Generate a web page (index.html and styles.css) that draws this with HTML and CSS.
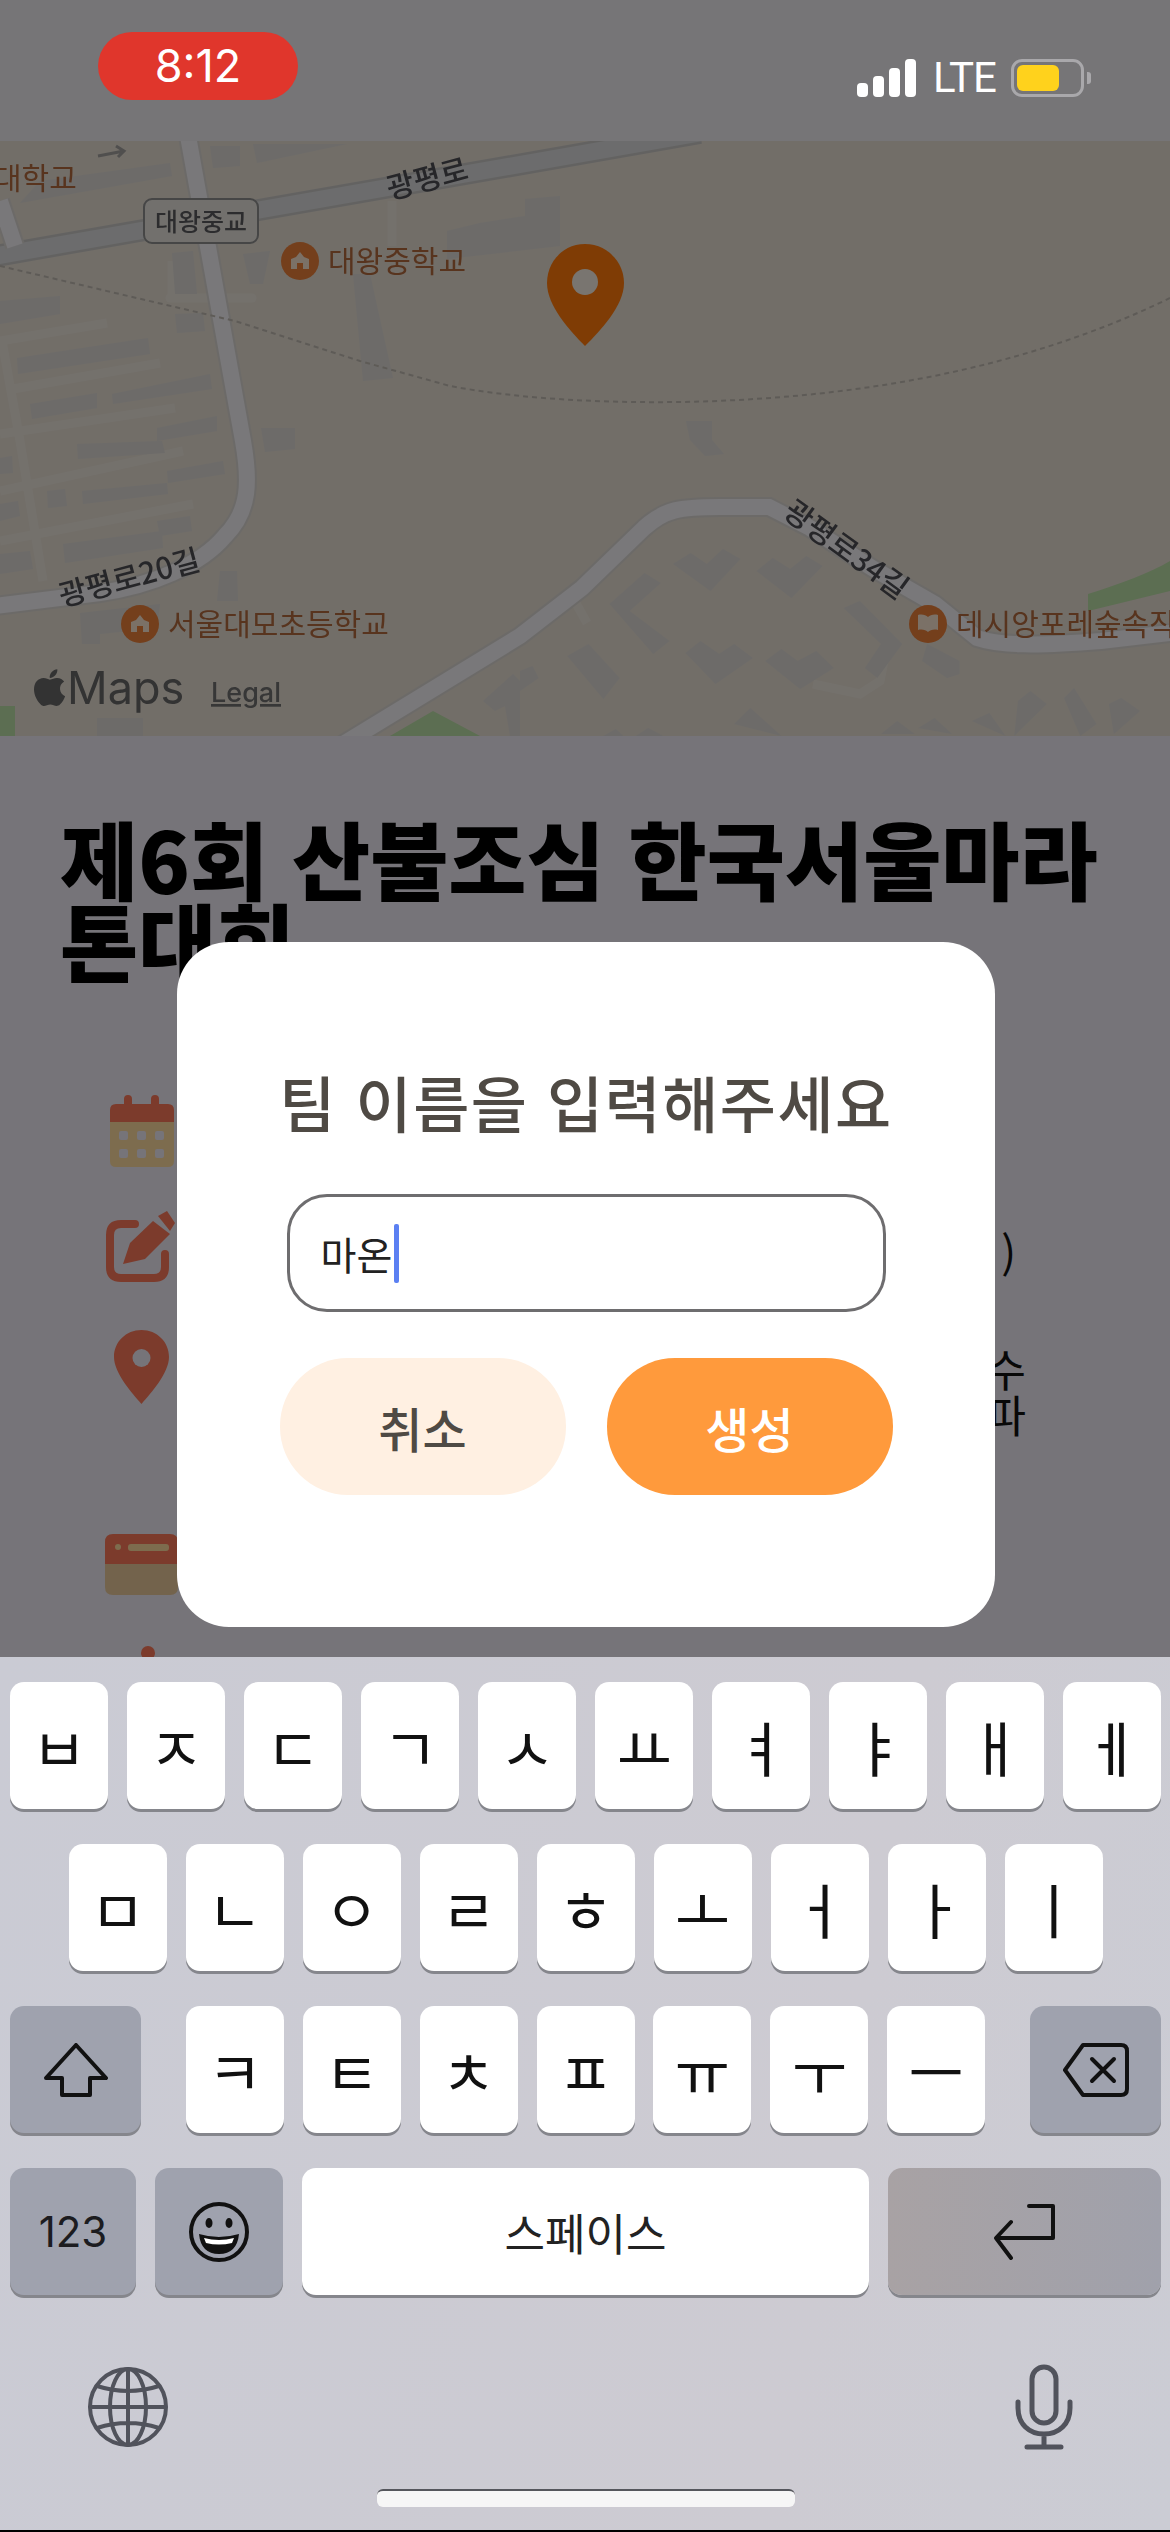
FILE: index.html

```html
<!DOCTYPE html>
<html lang="ko">
<head>
    <meta charset="UTF-8">
    <meta name="viewport" content="width=device-width, initial-scale=1.0">
    <title>제6회 산불조심 한국서울마라톤대회</title>
    <link rel="stylesheet" href="styles.css">
</head>
<body>
<div class="phone">
    <div class="status-bar">
        <div class="time-pill">8:12</div>
        <div class="status-right">
            <svg class="signal" width="60" height="38" viewBox="0 0 60 38">
                <rect x="0" y="24" width="11" height="14" rx="4" fill="#fff"/>
                <rect x="16" y="17" width="11" height="21" rx="4" fill="#fff"/>
                <rect x="32" y="9" width="11" height="29" rx="4" fill="#fff"/>
                <rect x="48" y="0" width="11" height="38" rx="4" fill="#fff"/>
            </svg>
            <span class="lte">LTE</span>
            <div class="battery"><div class="battery-fill"></div></div>
            <div class="battery-nub"></div>
        </div>
    </div>

    <div class="map">
        <svg class="map-svg" width="1170" height="595" viewBox="0 0 1170 595">
            <!-- green -->
            <path class="green" d="M1088 453C1120 443 1150 432 1170 420V450L1088 470Z"/>
            <path class="green" d="M0 565H15V595H0Z"/>
            <path class="green" d="M390 595L433 570L480 595Z"/>

            <!-- alleys -->
            <g class="alley">
                <path d="M0 200L107 182"/>
                <path d="M13 248L160 222"/>
                <path d="M0 293L175 267"/>
                <path d="M0 350L183 310"/>
                <path d="M0 400L193 363"/>
                <path d="M2 200L20 300L43 440"/>
                <path d="M170 157H252" stroke-linecap="round"/>
                <path d="M172 120V157"/>
                <path d="M392 60V105"/>
                <path d="M887 505L880 540L860 553L813 543"/>
                <path d="M573 457L587 482"/>
            </g>

            <!-- buildings -->
            <g class="building">
                <polygon points="210,5 240,5 240,25 213,27"/>
                <polygon points="253,3 347,3 257,22"/>
                <polygon points="40,40 170,22 172,35 20,62"/>
                <polygon points="172,112 193,110 197,153 175,153"/>
                <polygon points="175,173 203,172 205,190 177,192"/>
                <polygon points="243,113 270,110 263,143 250,143"/>
                <polygon points="353,133 370,133 393,237 363,240"/>
                <polygon points="447,90 480,82 525,75 525,58 560,55 560,105 447,118"/>
                <polygon points="0,160 60,155 60,173 0,183"/>
                <polygon points="17,217 148,197 150,213 18,233"/>
                <polygon points="112,253 210,233 212,248 113,263"/>
                <polygon points="30,263 97,252 97,267 32,278"/>
                <polygon points="157,287 217,275 217,290 157,300"/>
                <polygon points="77,303 162,300 165,312 78,318"/>
                <polygon points="167,330 223,320 225,333 168,342"/>
                <polygon points="82,350 167,342 168,353 83,363"/>
                <polygon points="47,350 65,348 67,365 48,367"/>
                <polygon points="157,380 190,375 192,390 160,395"/>
                <polygon points="63,403 162,390 163,407 65,422"/>
                <polygon points="0,317 12,315 13,332 0,333"/>
                <polygon points="0,363 18,360 20,375 0,380"/>
                <polygon points="0,413 30,410 33,428 0,433"/>
                <polygon points="261,287 295,287 295,308 265,311"/>
                <polygon points="220,430 237,430 238,460 217,460"/>
                <polygon points="80,472 160,463 157,487 100,493 100,503 82,503"/>
                <polygon points="97,577 143,577 143,595 97,595"/>
                <polygon points="686,280 712,280 712,299 724,313 705,315 690,299"/>
                <polygon points="483,560 513,533 520,540 520,595 510,595 505,565 495,570"/>
            </g>
            <g class="building" transform="translate(-127.4 0) scale(1.245 1)">
                <polygon points="643,423 657,412 670,423 683,408 697,418 673,450"/>
                <polygon points="710,430 723,417 737,428 750,415 763,425 738,457"/>
                <polygon points="653,512 665,500 680,513 692,503 707,517 677,543"/>
                <polygon points="717,520 730,508 743,520 758,510 772,527 745,548"/>
                <polygon points="592,463 620,432 633,442 608,470 640,500 627,513"/>
                <polygon points="558,515 575,503 600,537 587,558"/>
                <polygon points="780,467 793,460 827,503 807,537 797,527 810,503"/>
                <polygon points="847,503 873,520 873,533 863,537 843,520"/>
                <polygon points="692,583 705,567 730,595"/>
                <polygon points="810,593 823,580 837,593"/>
                <polygon points="840,587 853,577 867,593"/>
                <polygon points="883,580 897,572 910,595"/>
                <polygon points="920,560 930,550 943,563 917,595"/>
                <polygon points="957,557 965,547 983,583 970,595"/>
                <polygon points="993,563 1003,557 1018,570 997,593"/>
                <polygon points="520,530 530,525 535,537 520,550"/>
                <polygon points="587,595 597,588 603,595"/>
                <polygon points="613,595 623,587 635,595"/>
            </g>

            <!-- roads -->
            <path class="road-edge" d="M-10 116L700 -8"/>
            <path class="road-main" d="M-10 116L700 -8"/>
            <g class="roads-small">
                <path id="road-a" d="M188 -5L243 300C250 340 250 370 225 395C200 425 150 445 100 452L-5 465"/>
                <path id="road-b" d="M340 605L520 495L582 447L644 387C665 368 680 366 720 366H769L810 387L872 427L935 463L977 497C1000 505 1039 505 1101 500L1170 492"/>
                <path id="road-c" d="M0 60L15 105"/>
            </g>
            <g class="roads-small-fill">
                <use href="#road-a"/>
                <use href="#road-b"/>
                <use href="#road-c"/>
            </g>

            <path class="boundary" d="M0 125L235 180L360 220L450 245C520 258 600 262 680 261C850 258 1020 230 1170 157"/>
            <path class="one-way" d="M98 15L124 10M116 5L124 10L118 16"/>

            <!-- pin -->
            <path class="pin" d="M585 103C563 103 547 121 547 142C547 165 570 190 585 205C600 190 624 165 624 142C624 121 607 103 585 103Z"/>
            <circle class="pin-hole" cx="585" cy="141" r="13"/>

            <!-- labels -->
            <text class="place" x="-6" y="48">대학교</text>
            <rect class="shield" x="144" y="58" width="114" height="44" rx="8"/>
            <text class="shield-text" x="201" y="90">대왕중교</text>
            <text class="street" transform="translate(430 48) rotate(-15)">광평로</text>
            <text class="street" transform="translate(132 447) rotate(-15)">광평로20길</text>
            <text class="street" transform="translate(840 417) rotate(36)">광평로34길</text>

            <circle class="poi" cx="300" cy="120" r="19"/>
            <path class="poi-mark" d="M291 128V118L296 116L300 111L304 116L309 118V128H303V122H297V128Z"/>
            <text class="place" x="328" y="131">대왕중학교</text>

            <circle class="poi" cx="140" cy="483" r="19"/>
            <path class="poi-mark" d="M131 491V481L136 479L140 474L144 479L149 481V491H143V485H137V491Z"/>
            <text class="place" x="168" y="494">서울대모초등학교</text>

            <circle class="poi" cx="928" cy="483" r="19"/>
            <path class="poi-mark" d="M918 474C922 473 926 474 928 476C930 474 934 473 938 474V489C934 488 930 489 928 491C926 489 922 488 918 489Z"/>
            <text class="place" x="956" y="494">데시앙포레숲속작</text>

            <path class="brand" transform="translate(25 522) scale(2.05)" d="M17.05 20.28c-.98.95-2.05.8-3.08.35-1.09-.46-2.09-.48-3.24 0-1.44.62-2.2.44-3.06-.35C2.79 15.25 3.51 7.59 9.05 7.31c1.35.07 2.29.74 3.08.8 1.18-.24 2.31-.93 3.57-.84 1.51.12 2.65.72 3.4 1.8-3.12 1.87-2.38 5.98.48 7.13-.57 1.5-1.31 2.99-2.54 4.09zM12.03 7.25c-.15-2.23 1.66-4.07 3.74-4.25.29 2.58-2.34 4.5-3.74 4.25z"/>
            <text class="brand-text" x="67" y="563">Maps</text>
            <text class="legal" x="211" y="561">Legal</text>
        </svg>
    </div>

    <div class="content">
        <h1>제6회 산불조심 한국서울마라톤대회</h1>
        <div class="info-list">
            <div class="info-row">
                <svg class="info-icon info-icon-cal" width="64" height="72" viewBox="0 0 64 72">
                    <path class="icon-light" d="M0 27H64V66Q64 72 58 72H6Q0 72 0 66Z"/>
                    <path class="icon-dark" d="M0 27V15Q0 9 6 9H14V4Q14 0 18 0T22 4V9H41V4Q41 0 45 0T49 4V9H58Q64 9 64 15V27Z"/>
                    <g class="icon-hole">
                        <rect x="9" y="36" width="9" height="9" rx="2"/>
                        <rect x="27" y="36" width="9" height="9" rx="2"/>
                        <rect x="45" y="36" width="9" height="9" rx="2"/>
                        <rect x="9" y="54" width="9" height="9" rx="2"/>
                        <rect x="27" y="54" width="9" height="9" rx="2"/>
                        <rect x="45" y="54" width="9" height="9" rx="2"/>
                    </g>
                </svg>
            </div>
            <div class="info-row">
                <svg class="info-icon" width="71" height="72" viewBox="0 0 71 72">
                    <path class="icon-line" d="M30 13H16Q5 13 5 24V56Q5 67 16 67H49Q60 67 60 56V43"/>
                    <path class="icon-dark" d="M18 53L25 32L48 10L65 23L40 48Z"/>
                    <path class="icon-dark" d="M53 5L62 0L70 12L65 20Z"/>
                </svg>
                <div class="info-tail info-tail-paren">)</div>
            </div>
            <div class="info-row info-row-tall">
                <svg class="info-icon info-icon-pin" width="55" height="74" viewBox="0 0 55 74">
                    <path class="icon-dark" d="M27.5 0C12 0 0 12 0 27C0 43 18 63 27.5 74C37 63 55 43 55 27C55 12 43 0 27.5 0Z"/>
                    <circle class="icon-hole" cx="27.5" cy="28" r="9"/>
                </svg>
                <div class="info-tail">수<br>파</div>
            </div>
            <div class="info-row info-row-card">
                <svg class="info-icon" width="73" height="61" viewBox="0 0 73 61">
                    <path class="icon-tan" d="M0 30H73V53Q73 61 65 61H8Q0 61 0 53Z"/>
                    <path class="icon-dark" d="M0 30V8Q0 0 8 0H65Q73 0 73 8V30Z"/>
                    <rect class="icon-light" x="23" y="10" width="41" height="7" rx="3"/>
                    <circle class="icon-light" cx="13" cy="13" r="3"/>
                </svg>
            </div>
            <div class="info-row">
                <svg class="info-icon info-icon-person" width="16" height="40" viewBox="0 0 16 40">
                    <circle class="icon-dark" cx="8" cy="7" r="7"/>
                </svg>
            </div>
        </div>
    </div>

    <div class="scrim">
        <div class="modal">
            <div class="modal-title">팀 이름을 입력해주세요</div>
            <div class="team-input"><span>마온</span><i class="caret"></i></div>
            <div class="modal-buttons">
                <button class="btn btn-cancel">취소</button>
                <button class="btn btn-create">생성</button>
            </div>
        </div>
    </div>

    <div class="keyboard">
        <div class="kb-row">
            <div class="key">ㅂ</div><div class="key">ㅈ</div><div class="key">ㄷ</div><div class="key">ㄱ</div><div class="key">ㅅ</div>
            <div class="key">ㅛ</div><div class="key">ㅕ</div><div class="key">ㅑ</div><div class="key">ㅐ</div><div class="key">ㅔ</div>
        </div>
        <div class="kb-row kb-row-center">
            <div class="key">ㅁ</div><div class="key">ㄴ</div><div class="key">ㅇ</div><div class="key">ㄹ</div><div class="key">ㅎ</div>
            <div class="key">ㅗ</div><div class="key">ㅓ</div><div class="key">ㅏ</div><div class="key">ㅣ</div>
        </div>
        <div class="kb-row kb-row-third">
            <div class="key key-fn key-shift">
                <svg width="64" height="54" viewBox="0 0 64 54" fill="none" stroke="#111" stroke-width="4" stroke-linejoin="round">
                    <path d="M32 2L62 35H46V52H18V35H2Z"/>
                </svg>
            </div>
            <div class="key">ㅋ</div><div class="key">ㅌ</div><div class="key">ㅊ</div><div class="key">ㅍ</div>
            <div class="key">ㅠ</div><div class="key">ㅜ</div><div class="key">ㅡ</div>
            <div class="key key-fn key-back">
                <svg width="66" height="54" viewBox="0 0 66 54" fill="none" stroke="#111" stroke-width="4" stroke-linejoin="round" stroke-linecap="round">
                    <path d="M20 2H58Q64 2 64 8V46Q64 52 58 52H20L2 27Z"/>
                    <path d="M29 16L51 38M51 16L29 38"/>
                </svg>
            </div>
        </div>
        <div class="kb-row kb-row-bottom">
            <div class="key key-fn key-num">123</div>
            <div class="key key-fn key-emoji">
                <svg width="62" height="62" viewBox="0 0 62 62">
                    <circle cx="31" cy="31" r="28" fill="none" stroke="#111" stroke-width="4"/>
                    <ellipse cx="21" cy="22" rx="3.5" ry="5" fill="#111"/>
                    <ellipse cx="41" cy="22" rx="3.5" ry="5" fill="#111"/>
                    <path d="M11 33Q31 39 51 33Q49 53 31 53Q13 53 11 33Z" fill="#111"/>
                    <path d="M16 37Q31 41 46 37L44 42Q31 45 18 42Z" fill="#fff"/>
                </svg>
            </div>
            <div class="key key-space">스페이스</div>
            <div class="key key-fn key-return">
                <svg width="64" height="56" viewBox="0 0 64 56" fill="none" stroke="#111" stroke-width="4" stroke-linecap="round" stroke-linejoin="round">
                    <path d="M36 2H60V34H4M18 18L3 34L18 54"/>
                </svg>
            </div>
        </div>
        <div class="kb-tools">
            <svg width="82" height="82" viewBox="0 0 82 82" fill="none" stroke="#51535c" stroke-width="4">
                <circle cx="41" cy="41" r="38"/>
                <ellipse cx="41" cy="41" rx="18" ry="38"/>
                <path d="M41 3V79M3 41H79M10 20Q41 30 72 20M10 62Q41 52 72 62"/>
            </svg>
            <svg class="mic" width="58" height="86" viewBox="0 0 58 86" fill="none" stroke="#51535c" stroke-width="5" stroke-linecap="round">
                <rect x="17" y="3" width="24" height="56" rx="12"/>
                <path d="M3 38V44C3 60 14 70 29 70S55 60 55 44V38M29 70V83M12 83H46"/>
            </svg>
        </div>
        <div class="home-bar"></div>
    </div>
</div>
</body>
</html>
```

FILE: styles.css

```css
* {
    box-sizing: border-box;
}
html, body {
    margin: 0;
    padding: 0;
}
body {
    width: 1170px;
    height: 2532px;
    overflow: hidden;
    background-color: #000;
    font-family: "Noto Sans CJK KR", "Noto Sans", sans-serif;
}
.phone {
    position: relative;
    width: 1170px;
    height: 2532px;
    display: flex;
    flex-direction: column;
    background-color: #000;
}

/* status bar */
.status-bar {
    flex: 0 0 141px;
    display: flex;
    justify-content: space-between;
    align-items: flex-start;
    padding: 32px 79px 0 98px;
    background-color: #ecebef;
}
.time-pill {
    position: relative;
    z-index: 2;
    width: 200px;
    height: 68px;
    border-radius: 34px;
    background-color: #e0362c;
    color: #fff;
    font-family: Inter, sans-serif;
    font-size: 45px;
    line-height: 68px;
    text-align: center;
}
.status-right {
    position: relative;
    z-index: 2;
    display: flex;
    align-items: center;
    margin-top: 27px;
}
.lte {
    margin-left: 16px;
    color: #fff;
    font-family: Roboto, sans-serif;
    font-size: 42px;
    line-height: 38px;
    letter-spacing: -1px;
    width: 62px;
}
.battery {
    width: 73px;
    height: 38px;
    margin-left: 16px;
    padding: 3px;
    border: 3px solid #a9a8ab;
    border-radius: 11px;
}
.battery-fill {
    width: 42px;
    height: 100%;
    border-radius: 6px;
    background-color: #ffd21c;
}
.battery-nub {
    width: 4px;
    height: 12px;
    margin-left: 3px;
    border-radius: 0 3px 3px 0;
    background-color: #a9a8ab;
}

/* map */
.map {
    flex: 0 0 595px;
    overflow: hidden;
    background-color: #e4dcd1;
}
.map-svg {
    display: block;
    filter: blur(0.7px);
}
.green {
    fill: #b8dca4;
}
.alley path {
    fill: none;
    stroke: #e9e3d9;
    stroke-width: 9;
}
.building {
    fill: #dad7d3;
}
.road-edge {
    fill: none;
    stroke: #c6c5c3;
    stroke-width: 22;
}
.road-main {
    fill: none;
    stroke: #d8d9da;
    stroke-width: 17;
}
.roads-small {
    fill: none;
    stroke: #d8d5d1;
    stroke-width: 20;
}
.roads-small-fill {
    fill: none;
    stroke: #f2f0f4;
    stroke-width: 16;
}
.boundary {
    fill: none;
    stroke: #bdb7ae;
    stroke-width: 2;
    stroke-dasharray: 5 4;
}
.one-way {
    fill: none;
    stroke: #a09e9c;
    stroke-width: 3;
}
.pin {
    fill: #ff780a;
}
.pin-hole {
    fill: #f2ebe0;
}
.place {
    fill: #b0683c;
    font-size: 30px;
}
.street {
    fill: #4c4c52;
    font-size: 30px;
    font-weight: 500;
    text-anchor: middle;
}
.shield {
    fill: #e4e0da;
    stroke: #8c8c8c;
    stroke-width: 2;
}
.shield-text {
    fill: #58585c;
    font-size: 25px;
    font-weight: 500;
    text-anchor: middle;
}
.poi {
    fill: #e87e38;
}
.poi-mark {
    fill: #f6e2cf;
}
.brand {
    fill: #666;
}
.brand-text {
    fill: #666;
    font-family: Inter, sans-serif;
    font-size: 45px;
}
.legal {
    fill: #6e6e6e;
    font-family: Inter, sans-serif;
    font-size: 27px;
    font-weight: 500;
    text-decoration: underline;
}

/* page behind the dialog */
.content {
    flex: 0 0 921px;
    overflow: hidden;
    padding: 80px 60px 0;
    background-color: #ece8f2;
}
.content h1 {
    margin: 0 0 115px;
    color: #000;
    font-size: 85px;
    font-weight: 900;
    line-height: 82px;
}
.info-list {
    margin-left: 45px;
    width: 921px;
}
.info-row {
    display: flex;
    justify-content: space-between;
    align-items: flex-start;
    margin-bottom: 44px;
}
.info-row-tall {
    margin-bottom: 133px;
    height: 74px;
}
.info-row-card {
    margin-bottom: 51px;
}
.info-icon {
    display: block;
}
.info-icon-cal {
    margin-left: 5px;
}
.info-icon-pin {
    margin: 3px 0 0 9px;
}
.info-icon-person {
    margin-left: 35px;
}
.info-tail {
    width: 44px;
    margin-top: 18px;
    color: #111;
    font-size: 44px;
    line-height: 46px;
    text-align: right;
}
.info-tail-paren {
    padding-right: 10px;
}
.icon-dark {
    fill: #f87658;
}
.icon-light {
    fill: #fbd89c;
}
.icon-tan {
    fill: #e6c798;
}
.icon-hole {
    fill: #ece8f2;
}
.icon-line {
    fill: none;
    stroke: #f87658;
    stroke-width: 8;
    stroke-linecap: round;
}

/* dialog */
.scrim {
    position: absolute;
    top: 0;
    left: 0;
    width: 1170px;
    height: 1657px;
    z-index: 1;
    display: flex;
    justify-content: center;
    align-items: flex-end;
    padding: 0 0 30px 2px;
    background-color: rgba(0, 0, 0, 0.5);
}
.modal {
    width: 818px;
    height: 685px;
    display: flex;
    flex-direction: column;
    align-items: center;
    padding-top: 120px;
    border-radius: 52px;
    background-color: #fff;
}
.modal-title {
    height: 80px;
    color: #4f4a44;
    font-size: 61px;
    font-weight: 500;
    line-height: 80px;
    letter-spacing: 1.5px;
    white-space: nowrap;
}
.team-input {
    width: 599px;
    height: 118px;
    margin-top: 52px;
    padding-left: 31px;
    display: flex;
    align-items: center;
    border: 3px solid #6e6d6f;
    border-radius: 40px;
    color: #222;
    font-size: 39px;
}
.caret {
    width: 5px;
    height: 59px;
    margin-left: 2px;
    border-radius: 2px;
    background-color: #5b80f2;
}
.modal-buttons {
    display: flex;
    gap: 41px;
    margin-top: 46px;
}
.btn {
    width: 286px;
    height: 137px;
    border: 0;
    border-radius: 68px;
    font-family: inherit;
    font-size: 48px;
    font-weight: 500;
}
.btn-cancel {
    background-color: #fff0e2;
    color: #4f4a44;
}
.btn-create {
    background-color: #ff9a3c;
    color: #fff;
}

/* keyboard */
.keyboard {
    flex: 0 0 873px;
    padding: 25px 9px 0 10px;
    background: linear-gradient(100deg, #cacbd4 0%, #cdcbd2 70%, #cbccd4 100%);
}
.kb-row {
    display: flex;
    justify-content: space-between;
    margin-bottom: 35px;
}
.kb-row-center {
    justify-content: center;
    gap: 19px;
}
.key {
    width: 98px;
    height: 127px;
    display: flex;
    justify-content: center;
    align-items: center;
    border-radius: 14px;
    background-color: #fff;
    box-shadow: 0 3px 0 #85868c;
    color: #111;
    font-size: 60px;
    line-height: 1;
}
.key-fn {
    background-color: #9fa2ae;
}
.key-shift, .key-back {
    width: 131px;
}
.kb-row-third .key-shift {
    margin-right: 26px;
}
.kb-row-third .key-back {
    margin-left: 26px;
}
.kb-row-bottom {
    justify-content: flex-start;
    gap: 19px;
    margin-bottom: 0;
}
.key-num {
    width: 126px;
    font-family: Inter, sans-serif;
    font-size: 42px;
    color: #1c1c20;
}
.key-emoji {
    width: 128px;
}
.key-space {
    width: 568px;
    font-size: 44px;
    color: #222;
}
.key-return {
    width: 273px;
    background: linear-gradient(90deg, #a8a2a4, #a0a1ab);
}
.kb-tools {
    display: flex;
    justify-content: space-between;
    align-items: center;
    padding: 0 88px 0 77px;
    margin-top: 69px;
}
.home-bar {
    width: 418px;
    height: 18px;
    margin: 39px auto 0;
    border-top: 2px solid #55565c;
    border-radius: 6px;
    background-color: #f6f6f6;
}
```
